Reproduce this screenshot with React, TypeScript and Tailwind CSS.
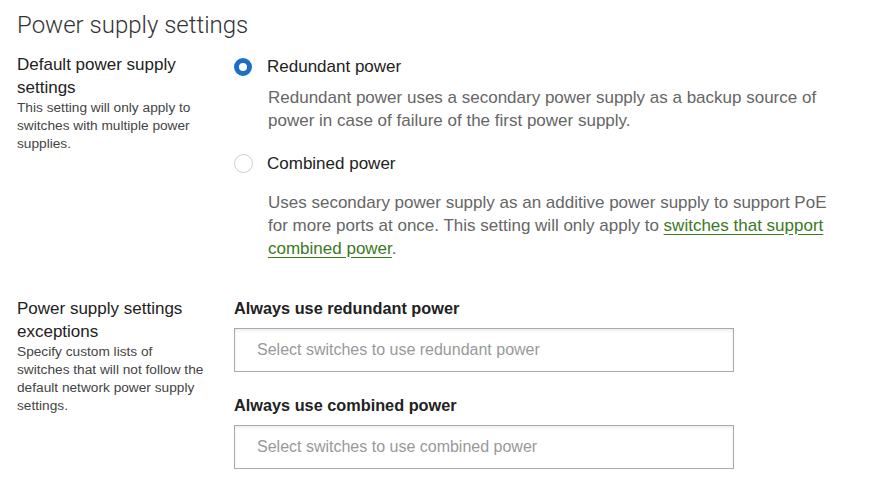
import { useState } from 'react';

type Mode = 'redundant' | 'combined';

function Radio({ checked, onClick }: { checked: boolean; onClick: () => void }) {
  return (
    <button
      type="button"
      onClick={onClick}
      className={
        checked
          ? 'w-[18px] h-[18px] shrink-0 rounded-full border-[5px] border-[#1c6fc7] bg-white'
          : 'w-[19px] h-[19px] shrink-0 rounded-full border border-[#cfcfcf] bg-white'
      }
    />
  );
}

export default function App() {
  const [mode, setMode] = useState<Mode>('redundant');

  return (
    <main className="min-h-screen bg-white pl-[17px] pt-[9px] font-['Liberation_Sans',Arial,sans-serif] text-[#222]">
      <h1 className="font-['Roboto',sans-serif] font-light text-[24px] leading-[32px] text-[#333]">
        Power supply settings
      </h1>

      <section className="grid grid-cols-[217px_1fr] mt-[12px]">
        <div className="w-[195px]">
          <h2 className="text-[17px] leading-[23px] text-[#222]">Default power supply settings</h2>
          <p className="text-[13.7px] leading-[18px] text-[#444]">
            This setting will only apply to switches with multiple power supplies.
          </p>
        </div>

        <div className="pt-[2px]">
          <label className="flex items-center gap-[15px] h-[23px] cursor-pointer">
            <Radio checked={mode === 'redundant'} onClick={() => setMode('redundant')} />
            <span className="text-[17px] text-[#222]">Redundant power</span>
          </label>
          <p className="ml-[34px] mt-[8px] w-[570px] text-[17px] leading-[23px] text-[#666]">
            Redundant power uses a secondary power supply as a backup source of power in case of failure of the first power supply.
          </p>

          <label className="flex items-center gap-[14px] h-[23px] mt-[20px] cursor-pointer">
            <Radio checked={mode === 'combined'} onClick={() => setMode('combined')} />
            <span className="text-[17px] text-[#222]">Combined power</span>
          </label>
          <p className="ml-[34px] mt-[16px] w-[570px] text-[17px] leading-[23px] text-[#666]">
            Uses secondary power supply as an additive power supply to support PoE for more ports at once. This setting will only apply to{' '}
            <a href="#" className="text-[#3a7a1e] underline underline-offset-[3px]">switches that support combined power</a>.
          </p>
        </div>
      </section>

      <section className="grid grid-cols-[217px_1fr] mt-[37px]">
        <div className="w-[200px]">
          <h2 className="w-[195px] text-[17px] leading-[23px] text-[#222]">Power supply settings exceptions</h2>
          <p className="text-[13.7px] leading-[18px] text-[#444]">
            Specify custom lists of
            <br />
            switches that will not follow the
            <br />
            default network power supply
            <br />
            settings.
          </p>
        </div>

        <div>
          <h3 className="text-[16.3px] leading-[23px] font-bold text-[#222]">Always use redundant power</h3>
          <input
            placeholder="Select switches to use redundant power"
            className="mt-[8px] block w-[500px] h-[44px] px-[22px] border border-[#aaa] text-[16px] shadow-[inset_0_2px_3px_rgba(0,0,0,0.07)] placeholder:text-[#999] outline-none"
          />

          <h3 className="mt-[22px] text-[16.3px] leading-[23px] font-bold text-[#222]">Always use combined power</h3>
          <input
            placeholder="Select switches to use combined power"
            className="mt-[8px] block w-[500px] h-[44px] px-[22px] border border-[#aaa] text-[16px] shadow-[inset_0_2px_3px_rgba(0,0,0,0.07)] placeholder:text-[#999] outline-none"
          />
        </div>
      </section>
    </main>
  );
}
